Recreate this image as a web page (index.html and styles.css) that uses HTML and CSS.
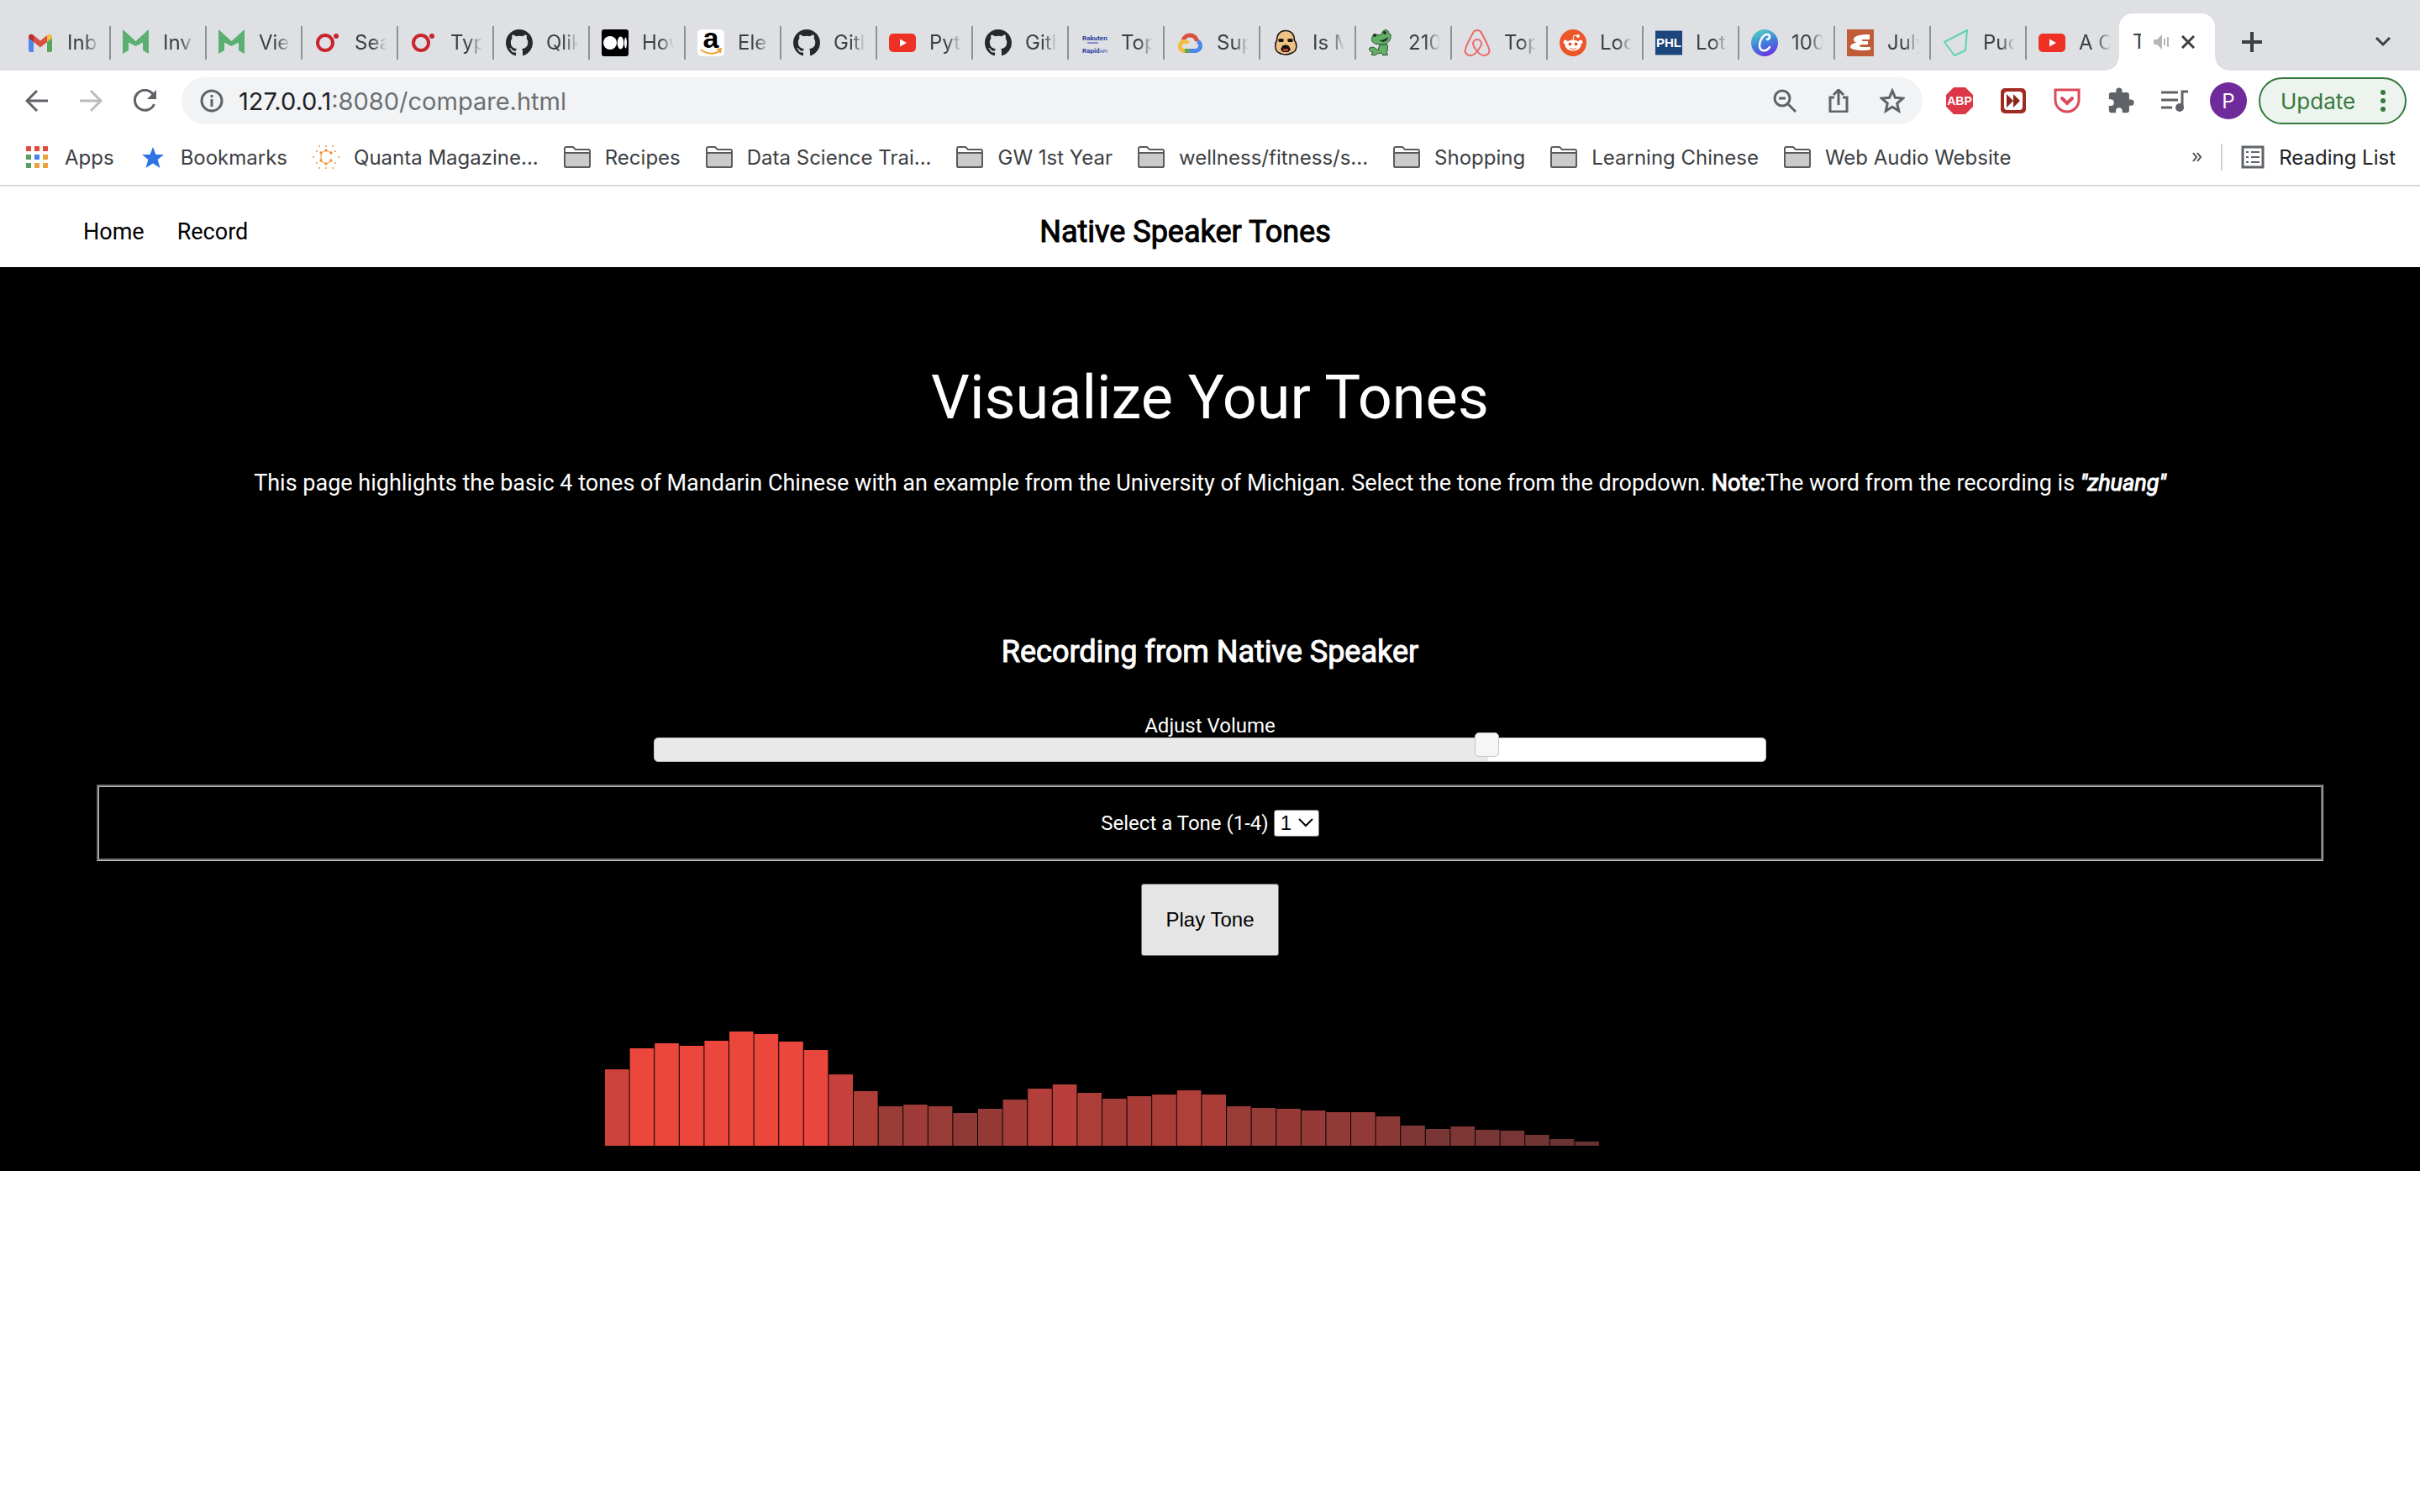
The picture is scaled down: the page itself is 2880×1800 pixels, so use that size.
FILE: index.html
```html
<!DOCTYPE html>
<html lang="en">
<head>
<meta charset="utf-8">
<title>Tones</title>
<link rel="stylesheet" href="styles.css">
</head>
<body>
<svg class="defs" aria-hidden="true">
  <symbol id="github" viewBox="0 0 16 16"><path fill="#24292e" d="M8 0C3.58 0 0 3.58 0 8c0 3.54 2.29 6.53 5.47 7.59.4.07.55-.17.55-.38 0-.19-.01-.82-.01-1.49-2.01.37-2.53-.49-2.69-.94-.09-.23-.48-.94-.82-1.13-.28-.15-.68-.52-.01-.53.63-.01 1.08.58 1.23.82.72 1.21 1.87.87 2.33.66.07-.52.28-.87.51-1.07-1.78-.2-3.64-.89-3.64-3.95 0-.87.31-1.59.82-2.15-.08-.2-.36-1.02.08-2.12 0 0 .67-.21 2.2.82.64-.18 1.32-.27 2-.27s1.36.09 2 .27c1.53-1.04 2.2-.82 2.2-.82.44 1.1.16 1.92.08 2.12.51.56.82 1.27.82 2.15 0 3.07-1.87 3.75-3.65 3.95.29.25.54.73.54 1.48 0 1.07-.01 1.93-.01 2.2 0 .21.15.46.55.38A8.01 8.01 0 0 0 16 8c0-4.42-3.58-8-8-8z"/></symbol>
  <symbol id="youtube" viewBox="0 0 32 32"><rect y="5" width="32" height="22" rx="5" fill="#ee3124"/><path fill="#fff" d="M13 11.500v9l8-4.500z"/></symbol>
  <symbol id="mail-m" viewBox="0 0 32 32"><path fill="#5bb071" d="M0 0l15.500 14L31 0v29l-7-4V15.500L15.500 20 7 15.500V25L0 29z"/></symbol>
  <symbol id="ring" viewBox="0 0 32 32"><circle cx="13" cy="16" r="9" fill="none" stroke="#c9252d" stroke-width="4"/><circle cx="26" cy="8" r="3" fill="#c9252d"/></symbol>
  <symbol id="folder" viewBox="0 0 32 26"><path fill="#fff" stroke="#5a5b5d" stroke-width="2" d="M1 23V3a2 2 0 0 1 2-2h8l3 3h15a2 2 0 0 1 2 2v17a2 2 0 0 1-2 2H3a2 2 0 0 1-2-2z"/><path fill="#cbcbcb" stroke="#5a5b5d" stroke-width="2" d="M1 8h30v15a2 2 0 0 1-2 2H3a2 2 0 0 1-2-2z"/></symbol>
</svg>

<div class="tabs" role="tablist">
  <div class="tab"><svg class="fav" viewBox="0 0 32 32"><path fill="#4f86ec" d="M2 9v16a2 2 0 0 0 2 2h4V13z"/><path fill="#58a55c" d="M30 9v16a2 2 0 0 1-2 2h-4V13z"/><path fill="#d95040" d="M8 7l8 6.500L24 7v8l-8 6.500L8 15z"/><path fill="#b33126" d="M2 9c0-4 4-4 6-2v8l-6-4.500z"/><path fill="#f2bd42" d="M30 9c0-4-4-4-6-2v8l6-4.500z"/></svg><span class="tab-name">Inb</span></div>
  <div class="tab"><svg class="fav"><use href="#mail-m"/></svg><span class="tab-name">Inv</span></div>
  <div class="tab"><svg class="fav"><use href="#mail-m"/></svg><span class="tab-name">Vie</span></div>
  <div class="tab"><svg class="fav"><use href="#ring"/></svg><span class="tab-name">Sea</span></div>
  <div class="tab"><svg class="fav"><use href="#ring"/></svg><span class="tab-name">Typ</span></div>
  <div class="tab"><svg class="fav"><use href="#github"/></svg><span class="tab-name">Qlik</span></div>
  <div class="tab"><svg class="fav" viewBox="0 0 32 32"><rect width="32" height="32" rx="3"/><g fill="#fff"><circle cx="10" cy="16" r="8"/><ellipse cx="22.500" cy="16" rx="3.800" ry="7.500"/><ellipse cx="28.500" cy="16" rx="1.500" ry="6.500"/></g></svg><span class="tab-name">How</span></div>
  <div class="tab"><svg class="fav" viewBox="0 0 32 32"><rect width="32" height="32" rx="5" fill="#fff"/><text class="glyph-a" x="16" y="22" text-anchor="middle">a</text><path fill="none" stroke="#f4a03a" stroke-width="2" d="M4 24c7 6 17 6 23 1M23 24l5-1-1 5"/></svg><span class="tab-name">Ele</span></div>
  <div class="tab"><svg class="fav"><use href="#github"/></svg><span class="tab-name">Gith</span></div>
  <div class="tab"><svg class="fav"><use href="#youtube"/></svg><span class="tab-name">Pyt</span></div>
  <div class="tab"><svg class="fav"><use href="#github"/></svg><span class="tab-name">Gith</span></div>
  <div class="tab"><svg class="fav" viewBox="0 0 32 32"><g class="glyph-rapid"><text x="2" y="13">Rakuten</text><text x="2" y="28">Rapid<tspan class="glyph-api">API</tspan></text></g><path stroke="#2c3c9c" stroke-width="1" d="M8 16h13"/></svg><span class="tab-name">Top</span></div>
  <div class="tab"><svg class="fav" viewBox="0 0 32 32"><path fill="none" stroke="#58a55c" stroke-width="5" d="M9 25.500h7"/><path fill="none" stroke="#4f86ec" stroke-width="5" d="M16 25.500h7a6 6 0 0 0 2-11.500"/><path fill="none" stroke="#d95040" stroke-width="5" d="M8 13a8.500 8.500 0 0 1 16.500 1"/><path fill="none" stroke="#f2bd42" stroke-width="5" d="M10 25.500a5.500 5.500 0 1 1 4-9"/></svg><span class="tab-name">Sup</span></div>
  <div class="tab"><svg class="fav" viewBox="0 0 32 32"><path fill="#edc186" stroke="#17110b" stroke-width="1.500" d="M16 1.500c7 0 10.500 5 10.500 11.500 3.500 4 3.500 13-3 15-4 2.500-11 2.500-15 0-6-2-5.500-11-3-15 0-6.500 3.500-11.500 10.500-11.500z"/><path d="M7 12q4-2 7 0l-1 3H8zM25 12q-4-2-7 0l1 3h5zM12 20c2-2 6-2 8 0l2 4-3 3h-6l-3-3z" fill="#17110b"/><path fill="#c3403a" d="M13 23h6v3h-6z"/></svg><span class="tab-name">Is M</span></div>
  <div class="tab"><svg class="fav" viewBox="0 0 32 32"><g fill="#62b066" stroke="#2a5233" stroke-width="1"><path d="M2 22c3-2 7 0 10 3l2-7h9c1 4 0 8-1 10l2 2-6 1-2-3-5 1-3 2-4-1 2-3c-3 0-5-2-4-5z"/><path d="M5 14c-1-4 0-8 4-8l6 1 3-5c3-3 7-1 7 3l2 1c1 6-3 12-10 12-6 0-11-1-12-4z"/></g><circle cx="8" cy="7" r="2" fill="#1c3323"/><circle cx="20" cy="4" r="2" fill="#1c3323"/><path fill="#1c3323" d="M13 13c5 0 8-2 11-4 0 3-2 5-6 6z"/></svg><span class="tab-name">210</span></div>
  <div class="tab"><svg class="fav" viewBox="0 0 32 32"><path fill="none" stroke="#ec6a68" stroke-width="2" d="M16 26c-4-5-5-7-5-9a5 5 0 0 1 10 0c0 2-1 4-5 9zm0 0c-3 4-6 5-8 5-5 0-7.500-4-6-8 2-6 6-13 9-19 2-4 8-4 10 0 3 6 7 13 9 19 1.500 4-1 8-6 8-2 0-5-1-8-5z"/></svg><span class="tab-name">Top</span></div>
  <div class="tab"><svg class="fav" viewBox="0 0 32 32"><circle cx="16" cy="16" r="16" fill="#ec5528"/><g fill="#fff"><ellipse cx="16" cy="19" rx="9.500" ry="6.500"/><circle cx="7" cy="15" r="2.500"/><circle cx="25" cy="15" r="2.500"/><circle cx="22" cy="8" r="2"/></g><path fill="none" stroke="#fff" stroke-width="1" d="M16 13l1-6 5 1"/><circle cx="12.500" cy="17.500" r="2" fill="#ec5528"/><circle cx="19.500" cy="17.500" r="2" fill="#ec5528"/><path fill="none" stroke="#ec5528" stroke-width="1" d="M12 22c2 2 6 2 8 0"/></svg><span class="tab-name">Loc</span></div>
  <div class="tab"><svg class="fav" viewBox="0 0 32 32"><path fill="#1b457c" d="M0 2h32v28H0z"/><path stroke="#8d9fb8" d="M0 1.500h32M0 30.500h32"/><text class="glyph-phl" x="16" y="21" text-anchor="middle">PHL</text></svg><span class="tab-name">Lot</span></div>
  <div class="tab"><svg class="fav" viewBox="0 0 32 32"><defs><linearGradient id="canva" x1="0.3" y1="0" x2="0.7" y2="1"><stop offset="0.1" stop-color="#4fc0c7"/><stop offset="0.5" stop-color="#3f80dc"/><stop offset="1" stop-color="#6f2de0"/></linearGradient></defs><circle cx="16" cy="16" r="16" fill="url(#canva)"/><path fill="none" stroke="#fff" stroke-width="2.500" stroke-linecap="round" d="M19 12c4-1 4-6 0-6-5 0-9 8-9 13 0 8 8 8 12 2"/></svg><span class="tab-name">100</span></div>
  <div class="tab"><svg class="fav" viewBox="0 0 32 32"><path fill="#c05c37" d="M0 0h32v32H0z"/><path fill="#fff" d="M27 6v6h-7c-3 0-3 2 0 2h5v4h-7c-4 0-4 3 0 3h10v3c-6 2-24 1-24-3 0-3 4-5 8-5-3-1-4-2-4-4 0-5 9-6 19-6z"/></svg><span class="tab-name">July</span></div>
  <div class="tab"><svg class="fav" viewBox="0 0 32 32"><path fill="none" stroke="#5fd4b0" stroke-width="2" stroke-linejoin="round" d="M2 15L29 1l-2 24-13 6z"/></svg><span class="tab-name">Puc</span></div>
  <div class="tab"><svg class="fav"><use href="#youtube"/></svg><span class="tab-name">A C</span></div>
  <div class="tab tab-active"><span class="tab-name">T</span><svg class="speaker" viewBox="0 0 20 20"><path fill="#b5b6b8" d="M1 7h4l6-6v18l-6-6H1z"/><path stroke="#b5b6b8" stroke-width="2" d="M14 6v8M18 4v12"/></svg><button class="icon-btn" aria-label="Close tab"><svg width="16" height="16" viewBox="0 0 16 16"><path stroke="#3c4043" stroke-width="3" d="M1 1l14 14M15 1L1 15"/></svg></button></div>
  <button class="icon-btn new-tab" aria-label="New tab"><svg width="24" height="24" viewBox="0 0 24 24"><path stroke="#3c4043" stroke-width="4" d="M12 0v24M0 12h24"/></svg></button>
  <button class="icon-btn tab-search" aria-label="Search tabs"><svg width="20" height="12" viewBox="0 0 20 12"><path fill="none" stroke="#3c4043" stroke-width="3" d="M2 1l8 8 8-8"/></svg></button>
</div>

<div class="toolbar">
  <button class="icon-btn nav-btn" aria-label="Back"><svg width="28" height="28" viewBox="0 0 28 28"><path fill="none" stroke="#5f6368" stroke-width="3" d="M27 14H3M14 2L2 14l12 12"/></svg></button>
  <button class="icon-btn nav-btn" aria-label="Forward"><svg width="28" height="28" viewBox="0 0 28 28"><path fill="none" stroke="#babcbe" stroke-width="3" d="M1 14h24M14 2l12 12-12 12"/></svg></button>
  <button class="icon-btn nav-btn" aria-label="Reload"><svg width="28" height="28" viewBox="0 0 28 28"><path fill="none" stroke="#5f6368" stroke-width="3" d="M24 6A12 12 0 1 0 25.500 18"/><path fill="#5f6368" d="M28 1v11H17z"/></svg></button>
  <div class="omnibox">
    <svg width="28" height="28" viewBox="0 0 28 28"><circle cx="14" cy="14" r="12" fill="none" stroke="#5f6368" stroke-width="3"/><path stroke="#5f6368" stroke-width="3" d="M14 12v9M14 7v3"/></svg>
    <a class="url" href="#"><span class="host">127.0.0.1</span>:8080/compare.html</a>
    <button class="icon-btn omni-btn" aria-label="Zoom"><svg width="28" height="28" viewBox="0 0 28 28"><g fill="none" stroke="#5f6368" stroke-width="3"><circle cx="11" cy="11" r="9"/><path d="M18 18l9 9M7 11h8"/></g></svg></button>
    <button class="icon-btn omni-btn" aria-label="Share"><svg width="28" height="28" viewBox="0 0 28 28"><path fill="none" stroke="#5f6368" stroke-width="3" d="M9 10H4v17h20V10h-5M14 19V2M8 7l6-6 6 6"/></svg></button>
    <button class="icon-btn omni-btn" aria-label="Bookmark"><svg width="30" height="30" viewBox="0 0 30 30"><path fill="none" stroke="#5f6368" stroke-width="3" d="M15 3l3.500 8.300 9 .8-6.800 6 2 8.900-7.700-4.700L7.300 27l2-8.900-6.800-6 9-.8z"/></svg></button>
  </div>
  <div class="extensions">
    <button class="icon-btn ext" aria-label="Adblock"><svg width="32" height="32" viewBox="0 0 32 32"><path fill="#dd3647" d="M9 0h14l9 9v14l-9 9H9l-9-9V9z"/><text class="glyph-abp" x="16" y="21" text-anchor="middle">ABP</text></svg></button>
    <button class="icon-btn ext" aria-label="Video speed"><svg width="32" height="32" viewBox="0 0 32 32"><rect x="1" y="1" width="30" height="30" rx="5" fill="#a02b22"/><rect x="5" y="5" width="22" height="22" rx="4" fill="#fff"/><path fill="#8c241d" d="M8 8l8 8-8 8zM16 8l8 8-8 8z"/></svg></button>
    <button class="icon-btn ext" aria-label="Pocket"><svg width="32" height="32" viewBox="0 0 32 32"><path fill="none" stroke="#dc4a5a" stroke-width="3" d="M2 3h28v12a14 14 0 0 1-28 0z"/><path fill="none" stroke="#dc4a5a" stroke-width="4" stroke-linecap="round" d="M10 13l6 6 6-6"/></svg></button>
    <button class="icon-btn ext" aria-label="Extensions"><svg width="34" height="34" viewBox="0 0 24 24"><path fill="#5f6368" d="M20.500 11H19V7a2 2 0 0 0-2-2h-4V3.500a2.500 2.500 0 0 0-5 0V5H4a2 2 0 0 0-2 2v3.800h1.500a2.700 2.700 0 0 1 0 5.400H2V20a2 2 0 0 0 2 2h3.800v-1.500a2.700 2.700 0 0 1 5.400 0V22H17a2 2 0 0 0 2-2v-4h1.500a2.500 2.500 0 0 0 0-5z"/></svg></button>
    <button class="icon-btn ext" aria-label="Media"><svg width="32" height="28" viewBox="0 0 32 28"><path fill="none" stroke="#5f6368" stroke-width="3" d="M0 4h20M0 13h20M0 22h13M25 22V3h7"/><circle cx="22" cy="22" r="5" fill="#5f6368"/></svg></button>
  </div>
  <button class="avatar">P</button>
  <button class="update">Update<svg width="6" height="28" viewBox="0 0 6 28"><g fill="#35793b"><circle cx="3" cy="4" r="3"/><circle cx="3" cy="14" r="3"/><circle cx="3" cy="24" r="3"/></g></svg></button>
</div>

<div class="bookmarks">
  <a href="#"><svg class="mark" viewBox="0 0 32 32"><g transform="translate(3 3)"><path fill="#e04a3f" d="M0 0h6v6H0zM10 0h6v6h-6zM20 0h6v6h-6z"/><path fill="#569f5e" d="M0 10h6v6H0zM0 20h6v6H0z"/><path fill="#3f86e8" d="M10 10h6v6h-6z"/><path fill="#e8a33d" d="M20 10h6v6h-6zM10 20h6v6h-6zM20 20h6v6h-6z"/></g></svg>Apps</a>
  <a href="#"><svg class="mark" viewBox="0 0 32 32"><path fill="#2f74e3" transform="translate(3 4)" d="M13 0l3.500 9H26l-7.300 6L21.500 25 13 19.500 4.500 25l2.800-10L0 9h9.500z"/></svg>Bookmarks</a>
  <a href="#"><svg class="mark" viewBox="0 -2 32 32"><path fill="none" stroke="#ef9240" stroke-width="1" d="M22 9l-6-3-6 3v10l6 3 6-3"/><g fill="#ef9240"><circle cx="16" cy="6" r="1.700"/><circle cx="22" cy="9" r="1.700"/><circle cx="10" cy="9" r="1.700"/><circle cx="10" cy="18" r="1.700"/><circle cx="16" cy="22" r="1.700"/><circle cx="22" cy="18" r="1.700"/><circle cx="1" cy="14" r="1"/><circle cx="31" cy="14" r="1"/><circle cx="5" cy="7" r="1"/><circle cx="27" cy="7" r="1"/><circle cx="5" cy="21" r="1"/><circle cx="27" cy="21" r="1"/><circle cx="8" cy="1" r="1"/><circle cx="16" cy="1" r="1"/><circle cx="24" cy="1" r="1"/><circle cx="8" cy="27" r="1"/><circle cx="16" cy="27" r="1"/><circle cx="24" cy="27" r="1"/></g></svg>Quanta Magazine...</a>
  <a href="#"><svg class="folder"><use href="#folder"/></svg>Recipes</a>
  <a href="#"><svg class="folder"><use href="#folder"/></svg>Data Science Trai...</a>
  <a href="#"><svg class="folder"><use href="#folder"/></svg>GW 1st Year</a>
  <a href="#"><svg class="folder"><use href="#folder"/></svg>wellness/fitness/s...</a>
  <a href="#"><svg class="folder"><use href="#folder"/></svg>Shopping</a>
  <a href="#"><svg class="folder"><use href="#folder"/></svg>Learning Chinese</a>
  <a href="#"><svg class="folder"><use href="#folder"/></svg>Web Audio Website</a>
  <button class="icon-btn more" aria-label="More bookmarks"><svg width="12" height="12" viewBox="0 0 12 12"><path fill="none" stroke="#4c4f53" stroke-width="2" d="M1 1l4 5-4 5M6 1l4 5-4 5"/></svg></button>
  <a class="reading" href="#"><svg width="28" height="28" viewBox="0 0 28 28"><path fill="none" stroke="#5f6368" stroke-width="3" d="M2 2h24v24H2z"/><path stroke="#5f6368" stroke-width="2" d="M6 8h3M12 8h10M6 14h3M12 14h10M6 20h3M12 20h10"/></svg>Reading List</a>
</div>

<header class="site-header">
  <nav><a href="#">Home</a><a href="#">Record</a></nav>
  <h3>Native Speaker Tones</h3>
</header>

<main>
  <h1>Visualize Your Tones</h1>
  <p>This page highlights the basic 4 tones of Mandarin Chinese with an example from the University of Michigan. Select the tone from the dropdown. <b>Note:</b>The word from the recording is <b><i>"zhuang"</i></b></p>
  <h3>Recording from Native Speaker</h3>
  <label class="volume-label" for="volume">Adjust Volume</label>
  <input class="volume" id="volume" type="range" min="0" max="1000" value="755">
  <div class="tone-box">
    <label for="tone">Select a Tone (1-4)</label>
    <select id="tone"><option>1</option><option>2</option><option>3</option><option>4</option></select>
  </div>
  <button class="play">Play Tone</button>
  <canvas id="spectrum" width="1440" height="150"></canvas>
</main>
<script src="script.js"></script>
</body>
</html>
```
FILE: styles.css
```css
* { box-sizing: border-box; }
body { margin: 0; background: #fff; font-family: Inter, "Liberation Sans", sans-serif; font-size: 24px; color: #3c4043; }
a { color: inherit; text-decoration: none; }
button { font: inherit; color: inherit; }
svg { flex: none; display: block; }
.defs { position: absolute; width: 0; height: 0; }
.icon-btn { display: flex; align-items: center; justify-content: center; padding: 0; border: 0; background: none; flex: none; }

/* Tab strip */
.tabs { display: flex; align-items: flex-end; height: 84px; padding: 0 28px 0 18px; background: #dee0e4; }
.tab { display: flex; align-items: center; gap: 16px; flex: none; width: 114px; height: 40px; margin-bottom: 13px; padding-left: 14px; border-right: 2px solid #8f9195; }
.tab:has(+ .tab-active) { border-color: transparent; }
.fav { width: 32px; height: 32px; }
.tab-name { width: 38px; overflow: hidden; white-space: nowrap; line-height: 32px; -webkit-mask-image: linear-gradient(90deg, #000 55%, transparent); mask-image: linear-gradient(90deg, #000 55%, transparent); }
.tab-active { position: relative; gap: 14px; height: 68px; margin: 0 24px 0 -4px; padding: 0 24px 0 16px; border: 0; border-radius: 16px 16px 0 0; background: #fff; }
.tab-active::before, .tab-active::after { content: ""; position: absolute; bottom: 0; width: 16px; height: 16px; }
.tab-active::before { right: 100%; background: radial-gradient(circle at 0 0, transparent 15px, #fff 16px); }
.tab-active::after { left: 100%; background: radial-gradient(circle at 100% 0, transparent 15px, #fff 16px); }
.tab-active .tab-name { width: 10px; -webkit-mask-image: none; mask-image: none; }
.speaker { width: 20px; height: 20px; }
.new-tab { width: 40px; height: 68px; }
.tab-search { width: 32px; height: 68px; margin-left: auto; }

/* Lettering inside icons */
.glyph-a { font: bold 34px "Liberation Sans", sans-serif; fill: #000; }
.glyph-rapid { font: bold 8px Roboto, sans-serif; fill: #2c3c9c; }
.glyph-api { font-size: 6px; font-weight: 400; }
.glyph-phl { font: bold 15px "Liberation Sans", sans-serif; fill: #fff; }
.glyph-abp { font: bold 14px "Liberation Sans", sans-serif; fill: #fff; }

/* Toolbar */
.toolbar { display: flex; align-items: center; height: 72px; padding: 0 16px 0 12px; }
.nav-btn { width: 64px; height: 56px; }
.omnibox { display: flex; align-items: center; flex: 1; height: 56px; margin-left: 12px; padding: 0 4px 0 22px; border-radius: 28px; background: #f1f3f5; }
.url { flex: 1; margin-left: 18px; font-size: 29px; color: #6c6f73; }
.host { color: #202124; }
.omni-btn { width: 64px; }
.extensions { display: flex; margin-left: 12px; }
.ext { width: 64px; height: 56px; }
.avatar { width: 44px; height: 44px; margin-left: 10px; padding: 0; border: 0; border-radius: 50%; background: #6f2a9b; color: #fff; }
.update { display: flex; align-items: center; justify-content: space-between; width: 176px; height: 56px; margin-left: 14px; padding: 0 23px 0 24px; border: 2px solid #35793b; border-radius: 28px; background: #edf3ef; color: #35793b; font-size: 26px; }

/* Bookmarks */
.bookmarks { display: flex; align-items: center; gap: 30px; height: 66px; padding: 0 29px 2px 28px; border-bottom: 2px solid #dadada; white-space: nowrap; }
.bookmarks a { display: flex; align-items: center; gap: 17px; }
.mark { width: 32px; height: 32px; }
.folder { width: 32px; height: 26px; }
.more { margin-left: auto; }
.bookmarks .reading { margin-left: -8px; height: 32px; padding-left: 22px; border-left: 2px solid #d0d2d4; color: #202124; }

/* Page */
.site-header, main { font-family: Roboto, "Liberation Sans", sans-serif; }
.site-header { display: grid; grid-template-columns: 1fr auto 1fr; align-items: center; height: 96px; padding: 12px 158px 0 99px; color: #000; }
.site-header nav { display: flex; gap: 39px; font-size: 27px; }
h1, h3, p { margin: 0; font-weight: 400; }
h3, b { font-weight: 400; -webkit-text-stroke: 1px currentColor; }
h3 { font-size: 36px; line-height: 44px; }
main { display: flex; flex-direction: column; align-items: center; padding: 112px 4% 30px; background: #000; color: #fff; }
h1 { font-size: 72px; line-height: 88px; }
p { margin-top: 41px; font-size: 27px; line-height: 32px; }
main h3 { margin-top: 163px; }
.volume-label { margin-top: 52px; line-height: 28px; }
.volume { -webkit-appearance: none; appearance: none; width: 50%; height: 29px; margin: 0; border: 1px solid #c5c5c5; border-radius: 5px; background: linear-gradient(90deg, #e9e9e9 75%, #fff 75%); }
.volume::-webkit-slider-thumb { -webkit-appearance: none; width: 29px; height: 29px; margin-top: -12px; border: 1px solid #c5c5c5; border-radius: 5px; background: #f6f6f6; }
.tone-box { display: flex; align-items: center; justify-content: center; gap: 6px; width: 100%; height: 91px; margin-top: 27px; border: 3px groove #c0c0c0; }
select { -webkit-appearance: none; appearance: none; width: 54px; height: 32px; padding: 0 7px; border: 1px solid #767676; border-radius: 3px; color: #000; font: 24px/28px "Liberation Sans", sans-serif; background: #fff url("data:image/svg+xml,%3Csvg xmlns='http://www.w3.org/2000/svg' width='18' height='11' viewBox='0 0 18 11'%3E%3Cpath fill='none' stroke='%23000' stroke-width='2' d='M1 1l8 8 8-8'/%3E%3C/svg%3E") no-repeat right 6px center; }
.play { width: 164px; height: 86px; margin-top: 27px; padding: 0; border: 1px solid #6b6b6b; border-radius: 3px; background: #e5e5e5; color: #000; font: 24px "Liberation Sans", sans-serif; }
#spectrum { display: block; width: 50vw; margin-top: 76px; }
```
FILE: script.js
```js
const levels = [91, 116, 122, 119, 125, 136, 133, 124, 114, 85, 65, 47, 49, 47, 39, 44, 55, 68, 73, 63,
  56, 59, 61, 66, 61, 47, 45, 44, 42, 40, 40, 35, 24, 20, 23, 19, 18, 13, 8, 5];
const canvas = document.getElementById('spectrum');
const ctx = canvas.getContext('2d');
const step = 29.6;
levels.forEach((level, i) => {
  const t = Math.min(level, 116);
  ctx.fillStyle = `rgb(${98 + t * 1.18}, ${51 + t * 0.17}, ${51 + t * 0.09})`;
  ctx.fillRect(i * step, canvas.height - level, step - 1, level);
});
```
